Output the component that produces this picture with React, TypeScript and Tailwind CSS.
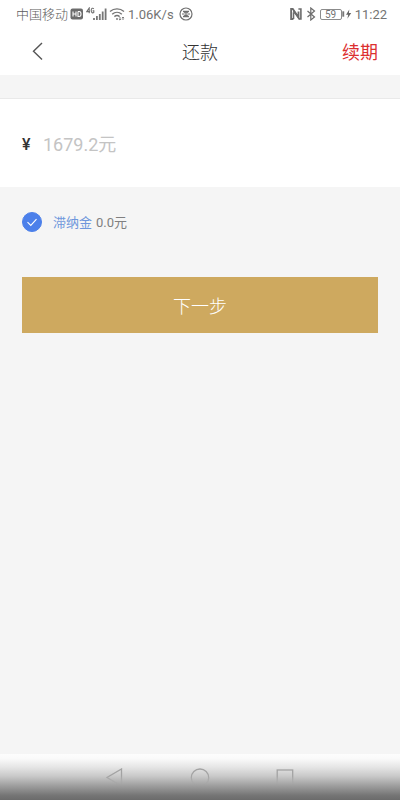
import { useState } from 'react';

function StatusBar() {
  return (
    <div className="flex h-7 items-center justify-between bg-white pl-4 pr-[13px] text-[13px] leading-none text-[#747474]">
      <div className="flex items-center">
        <span className="font-light text-[#5c5c5c]">中国移动</span>
        <svg className="ml-0.5 h-3 w-3.5" viewBox="0 0 14 12" aria-label="HD">
          <rect x="0.5" y="0.5" width="12.5" height="11" rx="2" fill="#6c6c6c" />
          <path d="M3 3.5v5M6 3.5v5M3 6h3M8 3.5v5h1.2c2.4 0 2.4-5 0-5H8" fill="none" stroke="#fff" strokeWidth="1.1" />
        </svg>
        <svg className="ml-0.5 h-3.5 w-[21px]" viewBox="0 0 21 14" fill="none" aria-label="4G">
          <path d="M3.2 6.2V1L0.8 4.6h3.2M7.8 1.8C7 0.8 5.2 1 5.2 3.5S7 6.2 7.8 5.4V3.7H6.6" stroke="#707070" strokeWidth="1.1" />
          <path d="M8 11v2M10.9 9v4M13.8 7v6M16.7 4.5V13M19.6 1.5V13" stroke="#777" strokeWidth="1.8" />
        </svg>
        <svg className="ml-0.5 h-3.5 w-4" viewBox="0 0 16 14" fill="none" stroke="#747474" strokeWidth="1.4" aria-label="Wi-Fi">
          <path d="M1 4.5C5 1 11 1 15 4.5M3.2 7.2c2.8-2.5 6.8-2.5 9.6 0M5.4 9.6c1.6-1.3 3.6-1.3 5.2 0" />
          <circle cx="8" cy="12" r="0.9" fill="#747474" stroke="none" />
          <path d="M11 10v3M9.9 12l1.1 1.1 1.1-1.1M14 13v-3M12.9 11.1l1.1-1.1 1.1 1.1" strokeWidth="0.9" />
        </svg>
        <span className="ml-[3px]">1.06K/s</span>
        <svg className="ml-[5px] h-3.5 w-3.5" viewBox="0 0 14 14" fill="none" stroke="#707070" strokeWidth="1.2">
          <circle cx="7" cy="7" r="6" />
          <path d="M4 4.4h6M4 9.6h6M3 7h2.6M8.4 7H11M4.6 4.4L7 6.2l2.4-1.8M4.6 9.6L7 7.8l2.4 1.8" />
        </svg>
      </div>
      <div className="flex items-center">
        <svg className="h-3 w-3" viewBox="0 0 12 12" fill="none" stroke="#6c6c6c" aria-label="NFC">
          <path d="M3.4 11H1.1V1h1.7l5.7 8.2V3.5" strokeWidth="1.8" />
          <path d="M3.5 11V4.2M8.4 1h2.5v10H9.2L3.5 2.8" strokeWidth="1.6" />
        </svg>
        <svg className="ml-1 h-3.5 w-2.5" viewBox="0 0 10 14" fill="none" stroke="#6c6c6c" strokeWidth="1.2" aria-label="Bluetooth">
          <path d="M1.5 4l7 6-3.7 3V1l3.7 3-7 6" />
        </svg>
        <span className="ml-1 flex h-[11px] w-[22px] items-center justify-center rounded-xs border border-[#8b8b8b] pt-0.5 text-[10px] leading-none">
          59
        </span>
        <svg className="h-3 w-2.5" viewBox="0 0 10 12" aria-hidden="true">
          <path d="M0.3 3.3h1.9v5.4H0.3z" fill="#777" />
          <path d="M7.3 1.5L4 6.7h2.2L5.4 10.7l3.8-5.6H6.9z" fill="#666" />
        </svg>
        <span className="ml-[3px]">11:22</span>
      </div>
    </div>
  );
}

function NavigationBar() {
  return (
    <nav className="h-[46px] bg-[linear-gradient(#fdfdfd_0%,#fafafa_10%,#e6e6e6_28%,#c9c9c9_48%,#a0a0a0_68%,#757575_90%,#6b6b6b_100%)]">
      {/* the keys sink into the shade below them */}
      <div className="flex justify-center gap-[66px] pt-3.5 [mask-image:linear-gradient(#000_65%,transparent_92%)]">
        <button type="button" aria-label="返回">
          <svg className="h-5 w-5" viewBox="0 0 20 20" fill="none" stroke="#a3a3a3" strokeWidth="1.3">
            <path d="M17.5 1v17L3 9.5z" />
          </svg>
        </button>
        <button type="button" aria-label="主屏幕">
          <svg className="h-5 w-5" viewBox="0 0 20 20" fill="none" stroke="#a3a3a3" strokeWidth="1.3">
            <circle cx="10" cy="9.7" r="8.7" />
          </svg>
        </button>
        <button type="button" aria-label="最近任务">
          <svg className="h-5 w-5" viewBox="0 0 20 20" fill="none" stroke="#a3a3a3" strokeWidth="1.3">
            <rect x="1.2" y="2" width="15.5" height="15.5" />
          </svg>
        </button>
      </div>
    </nav>
  );
}

export default function App() {
  const [amount, setAmount] = useState('');
  const [lateFee, setLateFee] = useState(true);

  return (
    <div className="flex min-h-screen flex-col bg-[#f5f5f5] font-[Roboto,'Noto_Sans_CJK_SC',sans-serif]">
      <StatusBar />

      <header className="grid h-[47px] grid-cols-3 items-center bg-white px-[22px] text-lg">
        <button type="button" aria-label="返回" className="w-8 pl-2">
          <svg className="h-5 w-4" viewBox="0 0 16 20" fill="none" stroke="#555" strokeWidth="1.4">
            <path d="M12 1L3.5 9.3 12 17.5" />
          </svg>
        </button>
        <h1 className="pt-[3px] text-center font-light text-[#333]">还款</h1>
        <button type="button" className="justify-self-end pt-[3px] text-[#dc3030]">续期</button>
      </header>

      <main className="flex-1 pt-[23px]">
        <div className="flex h-[89px] items-center border-t border-[#e9e9e9] bg-white px-[22px] pt-[3px] text-lg">
          <label htmlFor="amount" className="w-[21px] text-base font-medium text-[#333]">¥</label>
          <input
            id="amount"
            type="text"
            inputMode="decimal"
            value={amount}
            onChange={(e) => setAmount(e.target.value)}
            placeholder="1679.2元"
            className="min-w-0 flex-1 text-[#555] placeholder-[#c4c4c4] outline-none"
          />
        </div>

        <div className="px-[22px] pt-[25px]">
          <label className="flex h-5 items-center text-[13px]">
            <span className="relative h-5 w-5">
              <input
                type="checkbox"
                checked={lateFee}
                onChange={(e) => setLateFee(e.target.checked)}
                className="block h-5 w-5 appearance-none rounded-full border border-[#bbb] checked:border-[#4c80ea] checked:bg-[#4c80ea]"
              />
              <svg className="pointer-events-none absolute inset-0 h-5 w-5" viewBox="0 0 20 20" fill="none" stroke="#fff" strokeWidth="1.1">
                <path d="M5.5 10.2l3.3 3.2 5.7-6.3" />
              </svg>
            </span>
            <span className="ml-[11px] pt-0.5 text-[#6f97dc]">滞纳金</span>
            <span className="ml-1 pt-0.5 text-[#808080]">0.0元</span>
          </label>

          <button type="button" className="mt-[45px] h-14 w-full bg-[#cea95f] pt-1 text-lg font-light text-white">
            下一步
          </button>
        </div>
      </main>

      <NavigationBar />
    </div>
  );
}
